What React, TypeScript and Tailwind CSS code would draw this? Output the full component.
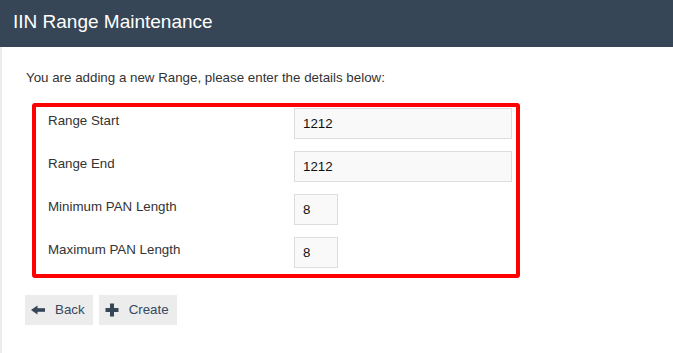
import { ReactNode } from 'react';

const rows = [
  { label: 'Range Start', value: '1212', wide: true },
  { label: 'Range End', value: '1212', wide: true },
  { label: 'Minimum PAN Length', value: '8', wide: false },
  { label: 'Maximum PAN Length', value: '8', wide: false },
];

function ArrowLeft() {
  return (
    <svg width="14" height="12" viewBox="0 0 14 12" className="shrink-0">
      <polygon points="0,6 6.5,1.5 6.5,10.5" fill="#364656" />
      <rect x="5.5" y="4.2" width="8.5" height="3.6" fill="#364656" />
    </svg>
  );
}

function Plus() {
  return (
    <svg width="14" height="14" viewBox="0 0 14 14" className="shrink-0">
      <rect x="5" y="0.5" width="4" height="13" fill="#364656" />
      <rect x="0.5" y="5" width="13" height="4" fill="#364656" />
    </svg>
  );
}

function Button({ icon, label }: { icon: ReactNode; label: string }) {
  return (
    <button className="flex h-[30px] items-center gap-[10px] bg-[#ececec] pl-[6px] pr-[8px] text-[13.33px] text-[#34495e]">
      {icon}
      <span>{label}</span>
    </button>
  );
}

export default function App() {
  return (
    <div className="min-h-[353px] w-[673px] bg-white font-['Liberation_Sans',Arial,sans-serif]">
      {/* Header */}
      <div className="flex h-[47px] items-center bg-[#364656] pb-[2px] pl-[13px]">
        <h1 className="text-[19px] font-normal text-white">IIN Range Maintenance</h1>
      </div>

      {/* Body */}
      <div className="min-h-[306px] border-l-2 border-[#ececec] pl-[24px] pt-[21px]">
        <p className="text-[13.33px] leading-5 text-[#333]">
          You are adding a new Range, please enter the details below:
        </p>

        <div className="ml-[6px] mt-[15px] flex w-[488px] flex-col gap-[12px] rounded-[3px] border-4 border-[#ff0000] pb-[6px] pl-[12px] pt-[1px]">
          {rows.map((r) => (
            <div key={r.label} className="flex items-start">
              <div className="mt-[3px] w-[246px] text-[13.33px] leading-5 text-[#333]">{r.label}</div>
              <div
                className={
                  r.wide
                    ? 'flex h-[31px] w-[218px] items-center border border-[#dddddd] bg-[#f9f9f9] pl-[8px] text-[13.33px] text-[#111]'
                    : 'flex h-[31px] w-[44px] items-center border border-[#dddddd] bg-[#f9f9f9] pl-[8px] text-[13.33px] text-[#111]'
                }
              >
                {r.value}
              </div>
            </div>
          ))}
        </div>

        <div className="-ml-[1px] mt-[17px] flex gap-[6px]">
          <Button icon={<ArrowLeft />} label="Back" />
          <Button icon={<Plus />} label="Create" />
        </div>
      </div>
    </div>
  );
}
